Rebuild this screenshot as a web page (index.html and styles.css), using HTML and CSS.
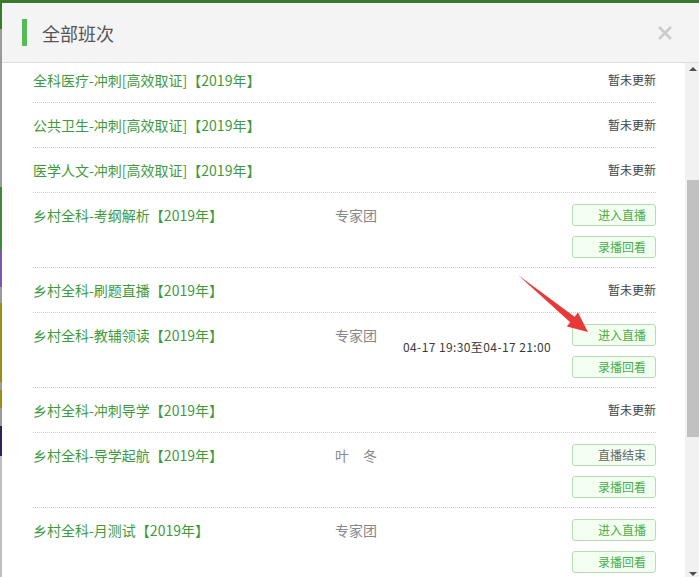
FILE: index.html
```html
<!DOCTYPE html>
<html lang="zh-CN">
<head>
  <meta charset="UTF-8">
  <meta name="viewport" content="width=device-width, initial-scale=1">
  <title>全部班次</title>
  <link rel="stylesheet" href="styles.css">
</head>
<body>
  <div class="backdrop">
    <!-- Modal dialog listing all classes -->
    <div class="modal">
      <div class="modal-header">
        <span class="accent"></span>
        <h2 class="modal-title">全部班次</h2>
        <span class="close">
          <svg width="16" height="16" viewBox="0 0 16 16"><path d="M2 2L14 14M14 2L2 14" stroke="#cccccc" stroke-width="2.6" fill="none"/></svg>
        </span>
      </div>

      <div class="modal-body">
        <div class="list">
          <div class="row">
            <div class="name">全科医疗-冲刺[高效取证]【2019年】</div>
            <div class="status">暂未更新</div>
          </div>
          <div class="row">
            <div class="name">公共卫生-冲刺[高效取证]【2019年】</div>
            <div class="status">暂未更新</div>
          </div>
          <div class="row">
            <div class="name">医学人文-冲刺[高效取证]【2019年】</div>
            <div class="status">暂未更新</div>
          </div>
          <div class="row">
            <div class="name">乡村全科-考纲解析【2019年】</div>
            <div class="teacher">专家团</div>
            <div class="time"></div>
            <div class="actions">
              <a class="btn">进入直播</a>
              <a class="btn">录播回看</a>
            </div>
          </div>
          <div class="row">
            <div class="name">乡村全科-刷题直播【2019年】</div>
            <div class="status">暂未更新</div>
          </div>
          <div class="row">
            <div class="name">乡村全科-教辅领读【2019年】</div>
            <div class="teacher">专家团</div>
            <div class="time">04-17 19:30至04-17 21:00</div>
            <div class="actions">
              <a class="btn">进入直播</a>
              <a class="btn">录播回看</a>
            </div>
          </div>
          <div class="row">
            <div class="name">乡村全科-冲刺导学【2019年】</div>
            <div class="status">暂未更新</div>
          </div>
          <div class="row">
            <div class="name">乡村全科-导学起航【2019年】</div>
            <div class="teacher">叶　冬</div>
            <div class="time"></div>
            <div class="actions">
              <a class="btn btn-ended">直播结束</a>
              <a class="btn">录播回看</a>
            </div>
          </div>
          <div class="row">
            <div class="name">乡村全科-月测试【2019年】</div>
            <div class="teacher">专家团</div>
            <div class="time"></div>
            <div class="actions">
              <a class="btn">进入直播</a>
              <a class="btn">录播回看</a>
            </div>
          </div>
        </div>

        <!-- Scrollbar look-alike -->
        <div class="scrollbar">
          <span class="arrow-up"></span>
          <span class="thumb"></span>
          <span class="arrow-down"></span>
        </div>
      </div>
    </div>
  </div>

  <!-- Red annotation arrow drawn over the list -->
  <svg class="annotation" width="699" height="577" viewBox="0 0 699 577">
    <polygon points="518,275 574.6,316.8 578,312.5 588,332 566.8,326.5 570.2,322.2" fill="#e8393a"/>
  </svg>
</body>
</html>
```

FILE: styles.css
```css
/* Page reset */
body {
  margin: 0;
  font-family: "Noto Sans CJK SC", "Noto Sans", sans-serif;
}
/* Page behind the dialog: green top bar and a coloured left strip */
.backdrop {
  width: 699px;
  height: 577px;
  padding: 3px 0 0 2px;
  box-sizing: border-box;
  background:
    linear-gradient(#3b7a2c, #3b7a2c) top left / 100% 3px no-repeat,
    linear-gradient(to bottom,
      #3b7a2c 0 29px, #9a9a9a 29px 187px, #3f8a36 187px 250px,
      #7a5aa8 250px 287px, #9a9a9a 287px 303px, #a08a10 303px 382px,
      #9a9a9a 382px 390px, #a08a10 390px 408px, #9a9a9a 408px 426px,
      #2b2458 426px 456px, #bdbdbd 456px) left top / 2px 100% no-repeat,
    #ffffff;
}
/* Dialog box */
.modal {
  height: 574px;
  display: flex;
  flex-direction: column;
  background: #fff;
}
.modal-header {
  height: 59px;
  display: flex;
  align-items: center;
  background: #f4f4f4;
  border-bottom: 1px solid #dddddd;
  padding-left: 20px;
}
.accent {
  width: 5px;
  height: 27px;
  background: #55bb55;
}
.modal-title {
  margin: 0 0 0 15px;
  font-size: 18px;
  font-weight: normal;
  color: #555;
}
.close {
  margin-left: auto;
  margin-right: 26px;
  display: flex;
}
/* Body with list and scrollbar side by side */
.modal-body {
  flex: 1;
  display: flex;
  overflow: hidden;
}
.list {
  flex: 1;
  overflow: hidden;
  padding: 0 29px 0 31px;
}
.list > .row:first-child {
  margin-top: -5px;
}
/* One class per row */
.row {
  display: grid;
  grid-template-columns: 302px 68px 1fr 84px;
  padding: 12px 0;
  border-bottom: 1px dotted #c8c8c8;
  line-height: 20px;
}
.name {
  font-size: 14px;
  color: #3f9a3f;
}
.teacher {
  font-size: 14px;
  color: #888;
}
.time {
  font-size: 12px;
  color: #3a3a3a;
  padding-top: 12px;
  letter-spacing: 0.4px;
}
.status {
  grid-column: 4;
  text-align: right;
  font-size: 12px;
  color: #444;
}
.row:has(.actions) {
  padding-bottom: 9px;
}
.actions {
  display: flex;
  flex-direction: column;
  gap: 10px;
  margin-top: -1px;
}
.btn {
  display: block;
  height: 20px;
  line-height: 20px;
  border: 1px solid #b4dfae;
  border-radius: 3px;
  background: #f3fff1;
  text-align: right;
  padding-right: 9px;
  font-size: 12px;
  color: #4aad4a;
}
.btn-ended {
  color: #666;
}
/* Scrollbar imitation */
.scrollbar {
  width: 14px;
  background: #f1f1f1;
  position: relative;
}
.thumb {
  position: absolute;
  left: 2px;
  right: 0;
  top: 117px;
  height: 257px;
  background: #c1c1c1;
}
.arrow-up, .arrow-down {
  position: absolute;
  left: 4px;
  width: 0;
  height: 0;
  border-left: 4px solid transparent;
  border-right: 4px solid transparent;
}
.arrow-up {
  top: 4px;
  border-bottom: 4px solid #505050;
}
.arrow-down {
  bottom: 1px;
  border-top: 4px solid #505050;
}
/* Annotation overlay */
.annotation {
  position: absolute;
  left: 0;
  top: 0;
  pointer-events: none;
}
```
